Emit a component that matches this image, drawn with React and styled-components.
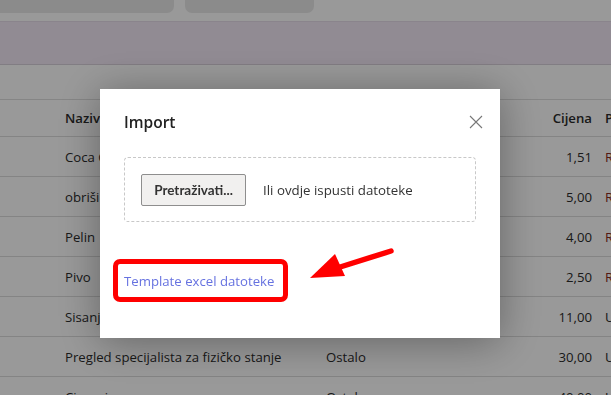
import styled, { createGlobalStyle } from 'styled-components';

const GlobalStyle = createGlobalStyle`
    html, body {
        margin: 0;
        padding: 0;
        background: #fff;
        overflow: hidden;
    }
    body {
        font-family: "Open Sans", "Noto Sans", Arial, sans-serif;
        color: #2b2b2b;
    }
`;

const Page = styled.div`
    width: 611px;
    height: 395px;
    overflow: hidden;
`;

const Toolbar = styled.div`
    display: flex;
    gap: 11px;
    height: 13px;
    margin-bottom: 8px;
`;
const ToolButton = styled.div`
    width: ${props => props.w}px;
    height: 13px;
    background: #e8e8e8;
    border-radius: 0 0 7px 7px;
    &:first-child {
        border-radius: 0 0 7px 0;
    }
`;

const Band = styled.div`
    height: 42px;
    background: #f2e8f5;
    border-top: 1px solid #e6dde9;
    border-bottom: 1px solid #d8d0da;
`;

const FilterArea = styled.div`
    height: 34px;
    border-bottom: 1px solid #dedede;
`;

const Row = styled.div`
    display: grid;
    grid-template-columns: 261px 186px 80px 1fr;
    align-items: center;
    height: ${props => props.head ? 36 : 39}px;
    padding-left: 65px;
    border-bottom: 1px solid #dcdcdc;
    font-size: 13.2px;
    font-weight: ${props => props.head ? 600 : 400};
    white-space: nowrap;
`;
const Cell = styled.div`
    overflow: hidden;
    text-align: ${props => props.right ? 'right' : 'left'};
    padding-left: ${props => props.pad || 0}px;
    color: ${props => props.color || 'inherit'};
`;

const Overlay = styled.div`
    position: fixed;
    inset: 0;
    background: rgba(0, 0, 0, 0.4);
    padding: 89px 0 0 100px;
`;

const Modal = styled.div`
    position: relative;
    width: 400px;
    height: 249px;
    box-sizing: border-box;
    background: #fff;
    padding: 22px 24px 0 24px;
    box-shadow: 0 4px 40px rgba(0, 0, 0, 0.35);
`;

const Header = styled.div`
    display: flex;
    justify-content: space-between;
    align-items: center;
    height: 22px;
    margin-bottom: 24px;
`;
const Title = styled.h4`
    margin: 0;
    font-size: 15.5px;
    font-weight: 600;
    color: #222;
`;
const Close = styled.button`
    display: flex;
    border: 0;
    background: none;
    padding: 0;
    margin-right: -7px;
    cursor: pointer;
`;

const DropZone = styled.div`
    display: flex;
    align-items: center;
    gap: 17px;
    height: 65px;
    box-sizing: border-box;
    padding: 0 16px;
    border: 1px dashed #c8c8c8;
    border-radius: 4px;
`;
const BrowseButton = styled.button`
    width: 105px;
    height: 32px;
    padding: 0;
    background: #f1f0ef;
    border: 1px solid #8e8e8e;
    border-radius: 2px;
    font-family: Lato, "Open Sans", sans-serif;
    font-size: 13.5px;
    font-weight: 700;
    color: #333;
`;
const DropText = styled.span`
    font-size: 13.3px;
    color: #333;
`;

const Highlight = styled.div`
    display: inline-block;
    margin: 37px 0 0 -11px;
    padding: 5px 9px 6px 6px;
    border: 5px solid #ff0000;
    border-radius: 7px;
`;
const TemplateLink = styled.a`
    font-size: 13.2px;
    color: #6672e0;
    text-decoration: none;
`;

const Arrow = styled.svg`
    position: absolute;
    left: 205px;
    top: 156px;
`;

const rows = [
    ['Coca Cola', 'Piće', '1,51', 'R'],
    ['obriši', 'Piće', '5,00', 'R'],
    ['Pelin', 'Piće', '4,00', 'R'],
    ['Pivo', 'Piće', '2,50', 'R'],
    ['Sisanje', 'Usluge', '11,00', 'U'],
    ['Pregled specijalista za fizičko stanje', 'Ostalo', '30,00', 'U'],
    ['Ciscenje', 'Ostalo', '40,00', 'U'],
];

export default function App() {
    return (
        <>
            <GlobalStyle />
            <Page>
                <Toolbar>
                    <ToolButton w={174} />
                    <ToolButton w={129} />
                </Toolbar>
                <Band />
                <FilterArea />
                <Row head>
                    <Cell>Naziv</Cell>
                    <Cell>Kategorija</Cell>
                    <Cell right>Cijena</Cell>
                    <Cell pad={13}>PDV</Cell>
                </Row>
                {rows.map(r => (
                    <Row key={r[0]}>
                        <Cell>{r[0]}</Cell>
                        <Cell>{r[1]}</Cell>
                        <Cell right>{r[2]}</Cell>
                        <Cell pad={13} color={r[3] === 'R' ? '#8a2a1c' : '#2b2b2b'}>{r[3]}</Cell>
                    </Row>
                ))}
            </Page>

            <Overlay>
                <Modal>
                    <Header>
                        <Title>Import</Title>
                        <Close>
                            <svg width="14" height="14" viewBox="0 0 14 14">
                                <path d="M1 1L13 13M13 1L1 13" stroke="#777" strokeWidth="1.1" fill="none" />
                            </svg>
                        </Close>
                    </Header>
                    <DropZone>
                        <BrowseButton>Pretraživati...</BrowseButton>
                        <DropText>Ili ovdje ispusti datoteke</DropText>
                    </DropZone>
                    <Highlight>
                        <TemplateLink href="#">Template excel datoteke</TemplateLink>
                    </Highlight>
                    <Arrow width="90" height="36" viewBox="0 0 90 36">
                        <path d="M86 6 L32 23" stroke="#ff0000" strokeWidth="5.5" strokeLinecap="round" />
                        <polygon points="5,33 30,9 40,31" fill="#ff0000" />
                    </Arrow>
                </Modal>
            </Overlay>
        </>
    );
}
